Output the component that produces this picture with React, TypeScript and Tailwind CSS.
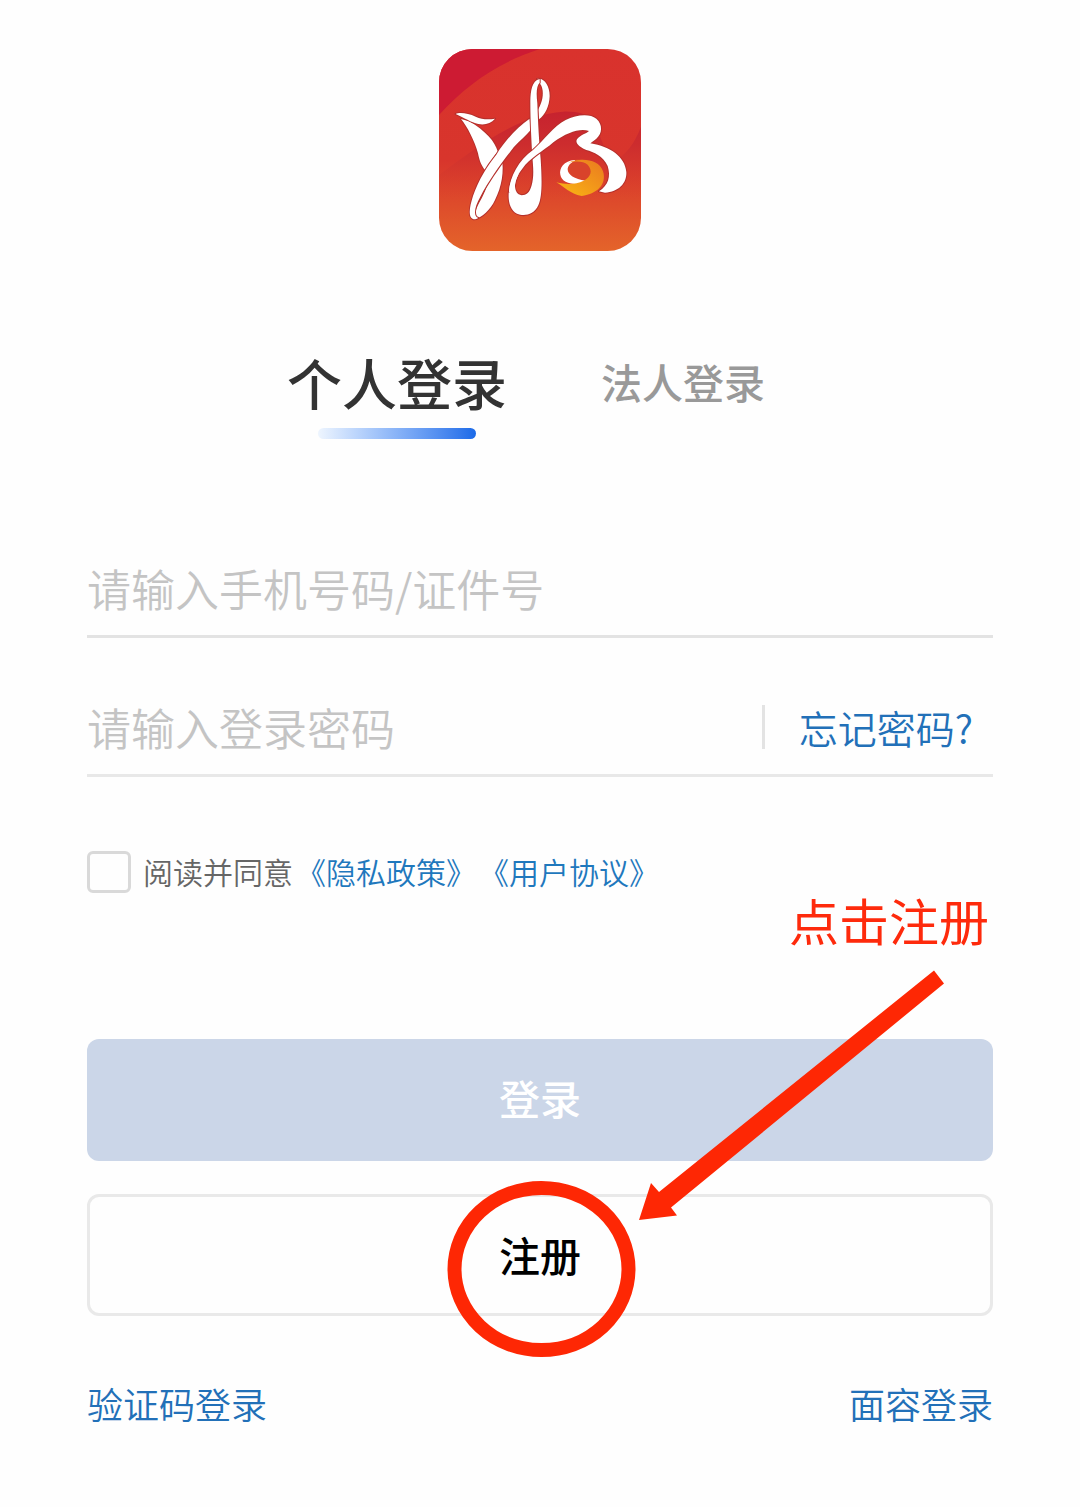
import { useState } from "react";

function Logo() {
  return (
    <svg viewBox="28 27 606 606" className="size-[202px]" role="img" aria-label="湘">
      <defs>
        <linearGradient id="base" x1="0" y1="0" x2="0" y2="1">
          <stop offset="0" stopColor="#d9322d" />
          <stop offset="0.55" stopColor="#d8352c" />
          <stop offset="1" stopColor="#e4642a" />
        </linearGradient>
        <linearGradient id="swath" x1="0" y1="210" x2="0" y2="480" gradientUnits="userSpaceOnUse">
          <stop offset="0" stopColor="#c6222f" />
          <stop offset="0.4" stopColor="#cd2d2e" />
          <stop offset="1" stopColor="#da432b" stopOpacity="0" />
        </linearGradient>
        <linearGradient id="gold" x1="0" y1="1" x2="1" y2="0">
          <stop offset="0" stopColor="#fbb813" />
          <stop offset="1" stopColor="#ea7a20" />
        </linearGradient>
        <clipPath id="card">
          <rect x="28" y="27" width="606" height="606" rx="100" />
        </clipPath>
      </defs>
      <g clipPath="url(#card)">
        <rect x="28" y="27" width="606" height="606" fill="url(#base)" />
        <path d="M28 27H330C200 70 110 135 28 225Z" fill="#cd1b33" />
        <path d="M28 405C130 330 260 225 400 215C440 213 475 222 490 240L545 370C590 345 615 310 634 260V520H28Z" fill="url(#swath)" />
      </g>
      <g fill="#fff" stroke="#b5302c" strokeWidth="6" strokeLinejoin="round" paintOrder="stroke">
        {/* bird head and wing */}
        <path d="M94 237C112 258 136 305 145 340C150 365 156 378 166 390L204 334C196 306 168 272 118 244Z" />
        <path d="M78 222C90 216 116 220 138 230C156 238 174 240 196 236C184 250 166 256 146 252C124 247 104 234 78 222Z" />
        {/* lower body */}
        <path d="M216 352C224 395 216 440 196 480C182 510 156 534 138 536C130 532 138 505 156 475C170 450 176 420 216 352Z" />
        {/* right side of the top loop */}
        <path d="M322 117C344 112 360 138 360 168C359 200 346 224 328 238L322 215C336 190 341 172 339 152C337 136 330 126 322 130Z" />
        {/* long diagonal with its tail loop */}
        <path d="M300 236C262 262 226 302 200 344C174 376 146 420 130 468C120 500 114 530 130 537C134 539 140 537 146 534C130 528 134 502 152 470C178 420 216 368 252 322C270 302 290 286 303 270Z" />
        {/* vertical stem down to the hook */}
        <path d="M330 117C306 122 303 154 302 184C302 250 306 310 308 352C312 390 312 414 306 436C300 458 290 466 276 466C260 464 252 446 256 422L238 450C234 480 240 510 262 521C282 530 312 526 326 496C338 470 337 420 333 358C328 300 325 250 323 190C319 158 321 136 330 128Z" />
        {/* sweeping ribbon */}
        <path d="M238 455C240 410 268 360 310 330C344 300 370 260 408 240C440 224 480 220 500 236C520 254 518 280 500 296C490 304 484 308 482 310C542 320 586 350 590 396C592 430 566 456 526 458L508 454C536 436 544 410 534 378C520 348 492 336 470 330C446 320 436 308 442 298C452 284 472 280 478 273C450 264 412 278 372 306C340 334 300 354 278 386C262 406 254 428 256 450Z" />
      </g>
      <path d="M238 455C240 430 250 405 263 386L266 404C254 425 254 440 260 456L248 480Z" fill="#fff" />
      <ellipse cx="448" cy="394" rx="40" ry="36" fill="#d9432b" />
      <path d="M436 360C402 362 388 386 392 404C396 424 416 434 456 432L468 422C434 418 414 404 414 388C414 378 422 368 436 362Z" fill="#fff" />
      <path d="M416 368C456 352 508 358 520 394C532 432 504 462 456 468C420 462 404 440 380 427C410 434 438 434 462 422C484 410 490 392 474 374C462 364 440 362 416 368Z" fill="url(#gold)" />
    </svg>
  );
}

export default function App() {
  const [tab, setTab] = useState(0);
  return (
    <main className="min-h-screen bg-[#fefefe] px-[87px] pt-[49px] pb-16 font-['Noto_Sans_CJK_SC',sans-serif]">
      <header className="flex justify-center">
        <Logo />
      </header>

      <div role="tablist" className="mx-auto mt-[100px] grid max-w-[572px] grid-cols-2">
        <button type="button" role="tab" aria-selected={tab === 0} onClick={() => setTab(0)} className="flex flex-col items-center text-[55px] leading-[60px] font-medium text-[#333]">
          <span className="whitespace-nowrap">个人登录</span>
          <span className="mt-[17px] h-[11px] w-[158px] rounded-full bg-linear-to-r from-[#eef5fe] to-[#1a6ae8]" />
        </button>
        <button type="button" role="tab" aria-selected={tab === 1} onClick={() => setTab(1)} className="self-start text-[41px] leading-[60px] font-medium whitespace-nowrap text-[#999]">
          法人登录
        </button>
      </div>

      <form onSubmit={(e) => e.preventDefault()}>
        <div className="mt-[117px] border-b-3 border-[#e3e3e3] pb-[15px]">
          <input type="text" aria-label="手机号码/证件号" placeholder="请输入手机号码/证件号" className="block h-16 w-full bg-transparent text-[44px] font-[350] outline-none placeholder:text-[#c4c4c4]" />
        </div>
        <div className="mt-[57px] flex items-center border-b-3 border-[#e8e8e8] pb-[15px]">
          <input type="password" aria-label="登录密码" placeholder="请输入登录密码" className="block h-16 min-w-0 flex-1 bg-transparent text-[44px] font-[350] outline-none placeholder:text-[#c4c4c4]" />
          <a href="#forgot" className="border-l-3 border-[#e3e3e3] pr-5 pl-[34px] text-[39px] leading-[44px] font-[350] whitespace-nowrap text-[#2270b8]">
            忘记密码?
          </a>
        </div>

        <div className="mt-[74px] flex items-center text-[30px] leading-[40px] font-[350] text-[#666]">
          <input id="agree" type="checkbox" className="mr-3 h-[42px] w-11 shrink-0 appearance-none rounded-md border-3 border-[#d9d9d9] checked:bg-[#2270b8]" />
          <div className="flex gap-[3px] pb-[2px] whitespace-nowrap">
            <label htmlFor="agree">阅读并同意</label>
            <a href="#privacy" className="text-[#1f78bd]">《隐私政策》</a>
            <a href="#terms" className="text-[#1f78bd]">《用户协议》</a>
          </div>
        </div>

        <p className="pr-1 text-right text-[50px] leading-[52px] text-[#fe2a0c]">点击注册</p>

        <div className="relative mt-[94px] flex flex-col gap-[33px]">
          <button type="submit" className="h-[122px] rounded-xl bg-[#cbd6e8] pb-1 text-[41px] font-medium text-white">登录</button>
          <button type="button" className="h-[122px] rounded-xl border-3 border-[#e9e9e9] text-[41px] font-medium text-black">注册</button>
          <svg viewBox="440 960 520 400" className="pointer-events-none absolute -top-[79px] left-1/2 -ml-[100px] h-[400px] w-[520px]" aria-hidden="true">
            <ellipse cx="541.5" cy="1269" rx="87" ry="81" fill="none" stroke="#fe2704" strokeWidth="14" />
            <path d="M934 970.5L944 983.5L671 1207.5L677 1215.5L639 1220L651 1183L659 1192Z" fill="#fe2704" />
          </svg>
        </div>
      </form>

      <nav className="mt-[61px] flex justify-between text-[36px] leading-[52px] font-[350] text-[#2270b8]">
        <a href="#code">验证码登录</a>
        <a href="#face">面容登录</a>
      </nav>
    </main>
  );
}
